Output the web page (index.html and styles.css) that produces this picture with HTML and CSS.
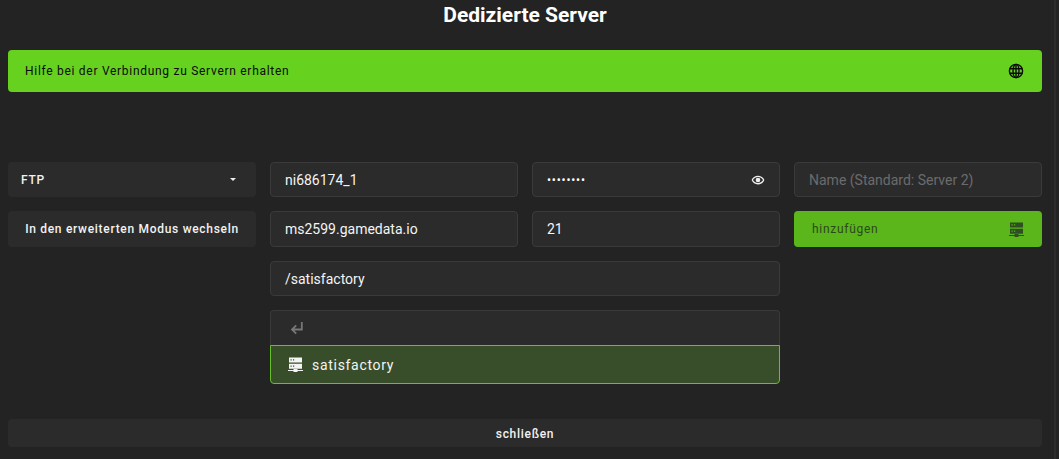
FILE: index.html
```html
<!DOCTYPE html>
<html lang="de">
<head>
<meta charset="utf-8">
<title>Dedizierte Server</title>
<link rel="stylesheet" href="styles.css">
</head>
<body>
<main class="page">
  <h1 class="title">Dedizierte Server</h1>
  <a class="help">
    <span>Hilfe bei der Verbindung zu Servern erhalten</span>
    <svg class="icon" viewBox="0 0 16 16" width="16" height="16" fill="none" stroke="currentColor" stroke-width="1.4"><circle cx="8" cy="8" r="6.6"/><ellipse cx="8" cy="8" rx="3" ry="6.6"/><path d="M8 1.4v13.2M1.6 5.700h12.800M1.600 10.300h12.800"/></svg>
  </a>
  <div class="form">
    <div class="col">
      <div class="btn select"><span>FTP</span><i class="caret"></i></div>
      <div class="btn center">In den erweiterten Modus wechseln</div>
    </div>
    <div class="wide">
      <div class="field">ni686174_1</div>
      <div class="field pass"><span class="dots">••••••••</span>
        <svg class="eye" viewBox="0 0 24 24" width="14" height="14" fill="currentColor"><path d="M12 4.500C7 4.500 2.700 7.600 1 12c1.700 4.400 6 7.500 11 7.500s9.300-3.100 11-7.500c-1.700-4.400-6-7.500-11-7.500zm0 12.600c-3.200 0-6.700-1.900-8.600-5.100C5.300 8.800 8.800 6.900 12 6.900s6.700 1.900 8.600 5.100c-1.900 3.200-5.400 5.100-8.600 5.100zM12 8a4 4 0 1 0 0 8 4 4 0 0 0 0-8z"/></svg>
      </div>
      <div class="field">ms2599.gamedata.io</div>
      <div class="field">21</div>
      <div class="field span">/satisfactory</div>
      <div class="list span">
        <div class="up"><svg viewBox="0 0 14 14" width="14" height="14" fill="none" stroke="currentColor" stroke-width="1.800"><path d="M11.800 1v7.500H2M6.200 4.300 2 8.500l4.200 4.200"/></svg></div>
        <div class="dir">
          <svg class="srv" viewBox="0 0 15 15" width="15" height="15"><use href="#server"/></svg>
          <span>satisfactory</span>
        </div>
      </div>
    </div>
    <div class="col">
      <div class="field placeholder">Name (Standard: Server 2)</div>
      <div class="btn add"><span>hinzufügen</span>
        <svg class="srv" viewBox="0 0 15 15" width="15" height="15"><use href="#server"/></svg>
      </div>
    </div>
  </div>
  <div class="btn close">schließen</div>
</main>
<svg class="defs" width="0" height="0">
  <symbol id="server" viewBox="0 0 15 15">
    <path fill="currentColor" fill-rule="evenodd" d="M1 .5h13v5H1zM2.500 2.300v1.200h1.200V2.300zM5 2.300v1.200h1.200V2.300zM1 6.700h13v5H1zM2.500 8.500v1.200h1.200V8.500zM5 8.500v1.200h1.200V8.500zM0 13h5.500v-1h4v1H15v1H9.500v1h-4v-1H0z"/>
  </symbol>
</svg>
</body>
</html>
```
FILE: styles.css
```css
* { box-sizing: border-box; }
html, body { margin: 0; height: 100%; }
body {
  background: #232323;
  color: #fff;
  font-family: Roboto, "Liberation Sans", sans-serif;
  overflow: hidden;
}
body::after {
  content: "";
  position: fixed;
  top: 0;
  bottom: 0;
  right: 3px;
  width: 2px;
  background: #2c2c2c;
}
.page { width: 1050px; padding: 0 8px; }
.title {
  margin: 0;
  height: 50px;
  padding-top: 1px;
  text-align: center;
  font-size: 21px;
  line-height: 28px;
  font-weight: 700;
}
.help {
  height: 42px;
  display: flex;
  align-items: center;
  justify-content: space-between;
  padding: 0 18px 0 17px;
  background: #66d11f;
  border-radius: 4px;
  color: #0c0c0c;
  font-size: 12px;
  letter-spacing: .71px;
}
.form {
  margin-top: 70px;
  display: grid;
  grid-template-columns: 248px 510px 248px;
  gap: 14px;
  align-items: start;
}
.col { display: grid; gap: 14px; grid-template-rows: 35px 36px; }
.wide {
  display: grid;
  grid-template-columns: 248px 248px;
  grid-template-rows: 35px 36px 35px auto;
  gap: 14px;
}
.span { grid-column: 1 / -1; }
.field {
  display: flex;
  align-items: center;
  justify-content: space-between;
  padding: 0 14px;
  background: #2b2b2b;
  border: 1px solid #3a3a3a;
  border-radius: 4px;
  font-size: 14px;
  color: #f4f4f4;
}
.placeholder { color: #6b6b6b; }
.dots { font-size: 12px; letter-spacing: .8px; color: #fff; }
.eye { color: #eee; }
.btn {
  background: #2b2b2b;
  border-radius: 4px;
  display: flex;
  align-items: center;
  font-size: 12px;
  letter-spacing: .7px;
  color: #f2f2f2;
  font-weight: 500;
}
.select { justify-content: space-between; padding: 0 20px 0 13px; }
.center { justify-content: center; }
.caret {
  width: 0;
  height: 0;
  border-left: 3.500px solid transparent;
  border-right: 3.500px solid transparent;
  border-top: 3.500px solid #eee;
}
.add {
  justify-content: space-between;
  padding: 0 18px;
  background: #5ab61b;
  color: #2a4a1c;
  font-weight: 400;
  letter-spacing: .72px;
}
.add .srv { color: #2f4f22; }
.up {
  height: 35px;
  display: flex;
  align-items: center;
  padding-left: 19px;
  background: #2b2b2b;
  border: 1px solid #3a3a3a;
  border-bottom: 0;
  border-radius: 4px 4px 0 0;
  color: #777;
}
.dir {
  height: 39px;
  display: flex;
  align-items: center;
  gap: 9px;
  padding-left: 17px;
  background: #384d29;
  border: 1px solid #66c02a;
  border-radius: 0 0 4px 4px;
  font-size: 14px;
  letter-spacing: .7px;
  color: #f4f4f4;
}
.close {
  margin-top: 35px;
  height: 28px;
  padding-top: 1px;
  justify-content: center;
}
.defs { position: absolute; }
```
